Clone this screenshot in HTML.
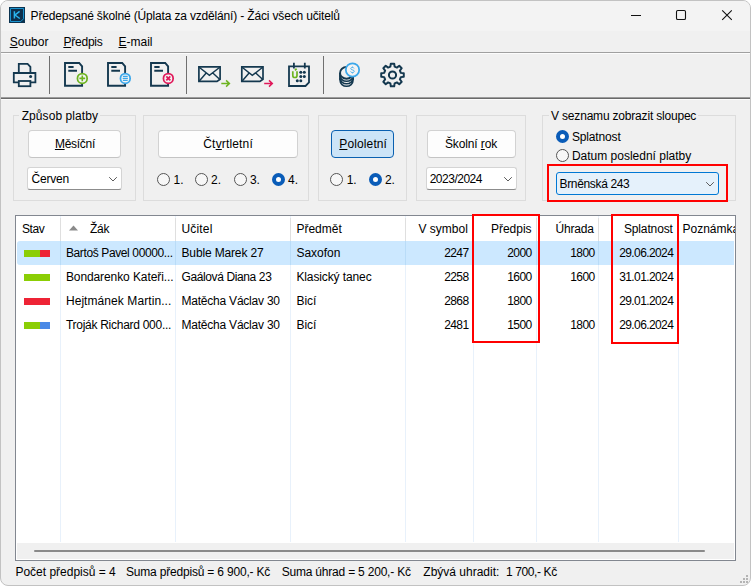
<!DOCTYPE html>
<html><head><meta charset="utf-8">
<style>
*{box-sizing:border-box;margin:0;padding:0}
html,body{width:751px;height:586px;overflow:hidden;background:#fff}
body{font-family:"Liberation Sans",sans-serif;font-size:12px;color:#000;position:relative}
.abs{position:absolute}
#win{position:absolute;left:0;top:0;width:751px;height:586px;background:#f0f0f0;border-radius:8px;overflow:hidden;border:1px solid #c2c2c2}
.t{position:absolute;white-space:nowrap;line-height:16px;height:16px}
.gb{position:absolute;border:1px solid #dcdcdc}
.btn{position:absolute;background:#fdfdfd;border:1px solid #d2d2d2;border-bottom-color:#c4c4c4;border-radius:4px;height:28px}
.cmb{position:absolute;background:#fff;border:1px solid #d4d4d4;border-bottom-color:#8c8c8c;border-radius:3px;height:23px}
.rad{position:absolute;width:13px;height:13px;border:1px solid #555;border-radius:50%;background:#f7f7f7}
.rad.on{border:4.4px solid #0a5cb8;background:#fff}
u{text-decoration:underline;text-underline-offset:1px}
.hl{position:absolute;height:1px}
.vl{position:absolute;width:1px}
.red{position:absolute;border:2px solid #ff0000}
</style></head><body>
<div id="win">
<div class="abs" style="left:-1px;top:-1px;width:751px;height:31px;background:#f3f3f3"></div>
<svg class="abs" style="left:8px;top:6px" width="16" height="16" viewBox="0 0 16 16"><rect x="0" y="0" width="16" height="16" fill="#0b3350"/><path d="M1.5 1.5h13v10.3l-2.7 2.7H1.5z" fill="#0d2f4b" stroke="#1a93cf" stroke-width="1"/><path d="M5.4 4.3v7.2M10.6 4.3l-4.6 3.7l4.8 3.5" fill="none" stroke="#2ab4ee" stroke-width="1.5"/></svg>
<div class="t" id="title" style="left:29.60px;top:7px;letter-spacing:-0.165px;">Předepsané školné (Úplata za vzdělání) - Žáci všech učitelů</div>
<svg class="abs" style="left:599px;top:-1px" width="150" height="30" viewBox="0 0 150 30"><path d="M31 15.5h10M122.2 10.3l9.6 9.6M131.8 10.3l-9.6 9.6" fill="none" stroke="#111" stroke-width="1.1"/><rect x="76.5" y="10.5" width="9" height="9" rx="1.3" fill="none" stroke="#111" stroke-width="1.1"/></svg>
<div class="t" id="m1" style="left:8.70px;top:33px;letter-spacing:0.000px;"><u>S</u>oubor</div><div class="t" id="m2" style="left:62.40px;top:33px;letter-spacing:-0.213px;"><u>P</u>ředpis</div><div class="t" id="m3" style="left:117.50px;top:33px;letter-spacing:0.000px;"><u>E</u>-mail</div>
<div class="hl" style="left:0;top:51px;width:751px;background:#a0a0a0"></div>
<div class="hl" style="left:0;top:52px;width:751px;background:#fcfcfc"></div>
<div class="hl" style="left:0;top:96px;width:751px;background:#9c9c9c"></div>
<div class="hl" style="left:0;top:97px;width:751px;background:#6a6a6a"></div>
<div class="hl" style="left:0;top:98px;width:751px;background:#fcfcfc"></div>
<div class="vl" style="left:48px;top:55px;height:38px;background:#707070"></div>
<div class="vl" style="left:185px;top:55px;height:38px;background:#707070"></div>
<div class="vl" style="left:322px;top:55px;height:38px;background:#707070"></div>
<svg class="abs" style="left:-1px;top:-1px" width="751" height="100" viewBox="0 0 751 100"><path d="M18.8 73V63.8H27.6L30.4 66.8V73" fill="none" stroke="#14384f" stroke-width="1.8"/><path d="M18.8 82.4H13.8V73H35.4V82.4H30.4" fill="none" stroke="#14384f" stroke-width="1.8"/><rect x="18.8" y="81" width="11.6" height="5.2" fill="none" stroke="#14384f" stroke-width="1.8"/><circle cx="30.6" cy="76.4" r="1.5" fill="#14384f"/><g transform="translate(64,0)"><path d="M1 63H15.2L18.1 66.4V85.8H1Z" fill="none" stroke="#14384f" stroke-width="1.9" stroke-linejoin="miter"/><path d="M4.3 67H9.6M4.3 70.7H13" stroke="#14384f" stroke-width="1.9" fill="none"/><circle cx="18.3" cy="78.4" r="4.85" fill="#f4f4f4" stroke="#6db31f" stroke-width="1.75"/><path d="M15.4 78.4H21.2M18.3 75.5V81.3" stroke="#6db31f" stroke-width="1.6" fill="none"/></g><g transform="translate(107,0)"><path d="M1 63H15.2L18.1 66.4V85.8H1Z" fill="none" stroke="#14384f" stroke-width="1.9" stroke-linejoin="miter"/><path d="M4.3 67H9.6M4.3 70.7H13" stroke="#14384f" stroke-width="1.9" fill="none"/><circle cx="18.3" cy="78.4" r="4.85" fill="#f4f4f4" stroke="#3ba7ea" stroke-width="1.75"/><path d="M15.9 76.4H20.7M15.7 78.4H20.9M15.9 80.4H20.7" stroke="#3ba7ea" stroke-width="1.15" fill="none"/></g><g transform="translate(150,0)"><path d="M1 63H15.2L18.1 66.4V85.8H1Z" fill="none" stroke="#14384f" stroke-width="1.9" stroke-linejoin="miter"/><path d="M4.3 67H9.6M4.3 70.7H13" stroke="#14384f" stroke-width="1.9" fill="none"/><circle cx="18.3" cy="78.4" r="4.85" fill="#f4f4f4" stroke="#e0195a" stroke-width="1.75"/><path d="M16.3 76.4L20.3 80.4M20.3 76.4L16.3 80.4" stroke="#e0195a" stroke-width="1.8" fill="none"/></g><g transform="translate(0,0)"><path d="M198.9 66.8H220.1V79.3L217 81.4H198.9Z" fill="none" stroke="#14384f" stroke-width="1.7" stroke-linejoin="miter"/><path d="M199.2 67.2L209.4 75.4L219.8 67.2M199.3 81L206.2 73M219.6 79.2L212.8 73" fill="none" stroke="#14384f" stroke-width="1.45"/><path d="M221.3 83.5H229.2M226.1 80.4L229.4 83.5L226.1 86.6" fill="none" stroke="#6db31f" stroke-width="1.5"/></g><g transform="translate(42.900000000000006,0)"><path d="M198.9 66.8H220.1V79.3L217 81.4H198.9Z" fill="none" stroke="#14384f" stroke-width="1.7" stroke-linejoin="miter"/><path d="M199.2 67.2L209.4 75.4L219.8 67.2M199.3 81L206.2 73M219.6 79.2L212.8 73" fill="none" stroke="#14384f" stroke-width="1.45"/><path d="M221.3 83.5H229.2M226.1 80.4L229.4 83.5L226.1 86.6" fill="none" stroke="#e0195a" stroke-width="1.5"/></g><path d="M289 66.3H309V82.5L305.5 86H289Z" fill="none" stroke="#14384f" stroke-width="1.8"/><path d="M293.9 62.8V68.6M304.8 62.8V68.6" stroke="#14384f" stroke-width="1.8"/><path d="M292.8 71.3V75.4a2.1 2.1 0 0 0 4.2 0V71.3M295 70.3L296.6 68.6" fill="none" stroke="#6db31f" stroke-width="1.7"/><circle cx="300.8" cy="72.3" r="1.5" fill="#14384f"/><circle cx="304.3" cy="72.3" r="1.5" fill="#14384f"/><circle cx="300.8" cy="76.6" r="1.5" fill="#14384f"/><circle cx="304.3" cy="76.6" r="1.5" fill="#14384f"/><circle cx="297.3" cy="80.8" r="1.5" fill="#14384f"/><circle cx="300.8" cy="80.8" r="1.5" fill="#14384f"/><ellipse cx="346.55" cy="72.9" rx="6.5" ry="5.9" fill="none" stroke="#14384f" stroke-width="1.9"/><path d="M340.05 72.9V80.4M353.05 72.9V80.4" fill="none" stroke="#14384f" stroke-width="1.9"/><path d="M340.05 75.4a6.5 5.9 0 0 0 13 0M340.05 77.9a6.5 5.9 0 0 0 13 0M340.05 80.4a6.5 5.9 0 0 0 13 0" fill="none" stroke="#14384f" stroke-width="1.5"/><circle cx="352.5" cy="69.9" r="6.65" fill="#f3f3f3" stroke="#3ba7ea" stroke-width="1.75"/><path d="M354 68.4c-0.3-0.7-0.9-1-1.6-1c-1 0-1.6 0.5-1.6 1.2c0 1.7 3.4 0.8 3.4 2.7c0 0.8-0.7 1.3-1.8 1.3c-0.9 0-1.5-0.4-1.8-1.1M352.5 66.6V67.4M352.5 72.6V73.4" fill="none" stroke="#3fabec" stroke-width="0.95"/><path d="M390.37 66.67L390.80 63.73L394.20 63.73L394.63 66.67L396.89 67.60L399.27 65.82L401.68 68.23L399.90 70.61L400.83 72.87L403.77 73.30L403.77 76.70L400.83 77.13L399.90 79.39L401.68 81.77L399.27 84.18L396.89 82.40L394.63 83.33L394.20 86.27L390.80 86.27L390.37 83.33L388.11 82.40L385.73 84.18L383.32 81.77L385.10 79.39L384.17 77.13L381.23 76.70L381.23 73.30L384.17 72.87L385.10 70.61L383.32 68.23L385.73 65.82L388.11 67.60Z" fill="none" stroke="#14384f" stroke-width="2" stroke-linejoin="round"/><circle cx="392.5" cy="75" r="3.6" fill="none" stroke="#14384f" stroke-width="2"/></svg>
<div class="gb" style="left:12px;top:114px;width:123px;height:86px"></div>
<div class="abs" style="left:18px;top:112px;width:81px;height:5px;background:#f0f0f0"></div>
<div class="t" id="gl1" style="left:20.70px;top:107px;letter-spacing:0.080px;background:#f0f0f0;">Způsob platby</div>
<div class="btn" style="left:27px;top:129px;width:93px"></div><div class="t" id="b1" style="left:53.90px;top:135px;letter-spacing:-0.266px;"><u>M</u>ěsíční</div>
<div class="cmb" style="left:26px;top:166px;width:95px"><svg class="abs" style="right:3px;top:8px" width="10" height="7" viewBox="0 0 10 7"><path d="M1.2 1.2L5 5L8.8 1.2" fill="none" stroke="#5c5c5c" stroke-width="1"/></svg></div><div class="t" id="c1" style="left:30.60px;top:170px;letter-spacing:-0.208px;">Červen</div>
<div class="gb" style="left:142px;top:114px;width:166px;height:86px"></div>
<div class="btn" style="left:157px;top:129px;width:140px"></div><div class="t" id="b2" style="left:202.30px;top:135px;letter-spacing:0.160px;">Čt<u>v</u>rtletní</div>
<div class="gb" style="left:317px;top:114px;width:89px;height:86px"></div>
<div class="btn" style="left:330px;top:129px;width:63px;background:#cce4f7;border-color:#0a60b0"></div><div class="t" id="b3" style="left:338.30px;top:135px;letter-spacing:0.120px;"><u>P</u>ololetní</div>
<div class="gb" style="left:415px;top:114px;width:110px;height:86px"></div>
<div class="btn" style="left:426px;top:129px;width:89px"></div><div class="t" id="b4" style="left:443.90px;top:135px;letter-spacing:-0.107px;">Školní <u>r</u>ok</div>
<div class="cmb" style="left:425px;top:166px;width:91px"><svg class="abs" style="right:3px;top:8px" width="10" height="7" viewBox="0 0 10 7"><path d="M1.2 1.2L5 5L8.8 1.2" fill="none" stroke="#5c5c5c" stroke-width="1"/></svg></div><div class="t" id="c2" style="left:428.70px;top:170px;letter-spacing:-0.500px;">2023/2024</div>
<div class="gb" style="left:541px;top:114px;width:194px;height:86px"></div>
<div class="abs" style="left:548px;top:112px;width:149px;height:5px;background:#f0f0f0"></div>
<div class="t" id="gl5" style="left:550.10px;top:107px;letter-spacing:-0.192px;background:#f0f0f0;">V seznamu zobrazit sloupec</div>
<div class="cmb" style="left:555px;top:171px;width:163px;background:#e5f1fb;border-color:#0078d4"><svg class="abs" style="right:3px;top:8px" width="10" height="7" viewBox="0 0 10 7"><path d="M1.2 1.2L5 5L8.8 1.2" fill="none" stroke="#5c5c5c" stroke-width="1"/></svg></div><div class="t" id="c3" style="left:558.50px;top:175px;letter-spacing:-0.342px;">Brněnská 243</div>
<div class="red" style="left:546px;top:163px;width:181px;height:38px"></div>
<div class="rad" style="left:156.0px;top:172.0px"></div><div class="t" id="rad0" style="left:172.50px;top:171px;letter-spacing:0.000px;">1.</div><div class="rad" style="left:193.5px;top:172.0px"></div><div class="t" id="rad1" style="left:210.10px;top:171px;letter-spacing:0.000px;">2.</div><div class="rad" style="left:232.8px;top:172.0px"></div><div class="t" id="rad2" style="left:248.90px;top:171px;letter-spacing:0.000px;">3.</div><div class="rad on" style="left:270.8px;top:172.0px"></div><div class="t" id="rad3" style="left:287.00px;top:171px;letter-spacing:0.000px;">4.</div><div class="rad" style="left:329.0px;top:172.0px"></div><div class="t" id="rad4" style="left:345.70px;top:171px;letter-spacing:0.000px;">1.</div><div class="rad on" style="left:367.9px;top:172.0px"></div><div class="t" id="rad5" style="left:383.90px;top:171px;letter-spacing:0.000px;">2.</div><div class="rad on" style="left:555.0px;top:129.0px"></div><div class="t" id="l_splat" style="left:570.90px;top:128px;letter-spacing:-0.140px;">Splatnost</div><div class="rad" style="left:555.0px;top:148.3px"></div><div class="t" id="l_datum" style="left:570.90px;top:147px;letter-spacing:0.000px;">Datum poslední platby</div>
<div class="abs" id="list" style="left:14px;top:214px;width:721px;height:346px;background:#fff;border:1px solid #828790;overflow:hidden"><div class="abs" style="left:1px;top:25px;width:717px;height:24px;background:#cce8ff;border-radius:3px 0 0 3px"></div><div class="vl" style="left:44px;top:0;height:326px;background:#e8f1fb"></div><div class="vl" style="left:44px;top:2px;height:23px;background:#dfdfdf"></div><div class="vl" style="left:44px;top:25px;height:24px;background:#b9dcf8"></div><div class="vl" style="left:159px;top:0;height:326px;background:#e8f1fb"></div><div class="vl" style="left:159px;top:2px;height:23px;background:#dfdfdf"></div><div class="vl" style="left:159px;top:25px;height:24px;background:#b9dcf8"></div><div class="vl" style="left:274px;top:0;height:326px;background:#e8f1fb"></div><div class="vl" style="left:274px;top:2px;height:23px;background:#dfdfdf"></div><div class="vl" style="left:274px;top:25px;height:24px;background:#b9dcf8"></div><div class="vl" style="left:389px;top:0;height:326px;background:#e8f1fb"></div><div class="vl" style="left:389px;top:2px;height:23px;background:#dfdfdf"></div><div class="vl" style="left:389px;top:25px;height:24px;background:#b9dcf8"></div><div class="vl" style="left:457px;top:0;height:326px;background:#e8f1fb"></div><div class="vl" style="left:457px;top:2px;height:23px;background:#dfdfdf"></div><div class="vl" style="left:457px;top:25px;height:24px;background:#b9dcf8"></div><div class="vl" style="left:520px;top:0;height:326px;background:#e8f1fb"></div><div class="vl" style="left:520px;top:2px;height:23px;background:#dfdfdf"></div><div class="vl" style="left:520px;top:25px;height:24px;background:#b9dcf8"></div><div class="vl" style="left:582px;top:0;height:326px;background:#e8f1fb"></div><div class="vl" style="left:582px;top:2px;height:23px;background:#dfdfdf"></div><div class="vl" style="left:582px;top:25px;height:24px;background:#b9dcf8"></div><div class="vl" style="left:662px;top:0;height:326px;background:#e8f1fb"></div><div class="vl" style="left:662px;top:2px;height:23px;background:#dfdfdf"></div><div class="vl" style="left:662px;top:25px;height:24px;background:#b9dcf8"></div><div class="t" id="h_stav" style="left:5.90px;top:5px;letter-spacing:-0.347px;">Stav</div><div class="t" id="h_zak" style="left:73.90px;top:5px;letter-spacing:-0.200px;">Žák</div><div class="t" id="h_ucitel" style="left:165.50px;top:5px;letter-spacing:0.160px;">Učitel</div><div class="t" id="h_predmet" style="left:280.40px;top:5px;letter-spacing:0.000px;">Předmět</div><div class="t" id="h_vsym" style="left:402.50px;top:5px;letter-spacing:0.000px;">V symbol</div><div class="t" id="h_predpis" style="left:474.90px;top:5px;letter-spacing:0.000px;">Předpis</div><div class="t" id="h_uhrada" style="left:539.50px;top:5px;letter-spacing:-0.192px;">Úhrada</div><div class="t" id="h_splat" style="left:607.90px;top:5px;letter-spacing:-0.130px;">Splatnost</div><div class="t" id="h_pozn" style="left:666.50px;top:5px;letter-spacing:0.000px;">Poznámka</div><svg class="abs" style="left:53px;top:9px" width="10" height="6"><path d="M0 5.5L4.5 0.5L9 5.5Z" fill="#8a8a8a"/></svg><div class="abs" style="left:8px;top:34px;width:16px;height:7px;background:#8bce05"></div><div class="abs" style="left:24px;top:34px;width:10px;height:7px;background:#ee2335"></div><div class="t" id="r0c2" style="left:49.90px;top:29px;letter-spacing:-0.376px;">Bartoš Pavel 00000...</div><div class="t" id="r0c3" style="left:165.50px;top:29px;letter-spacing:-0.148px;">Buble Marek 27</div><div class="t" id="r0c4" style="left:280.40px;top:29px;letter-spacing:0.000px;">Saxofon</div><div class="t" id="r0c5" style="left:428.20px;top:29px;letter-spacing:-0.600px;">2247</div><div class="t" id="r0c6" style="left:491.30px;top:29px;letter-spacing:-0.600px;">2000</div><div class="t" id="r0c7" style="left:554.30px;top:29px;letter-spacing:-0.600px;">1800</div><div class="t" id="r0c8" style="left:603.20px;top:29px;letter-spacing:-0.600px;">29.06.2024</div><div class="abs" style="left:8px;top:58px;width:26px;height:7px;background:#8bce05"></div><div class="t" id="r1c2" style="left:49.90px;top:53px;letter-spacing:-0.093px;">Bondarenko Kateři...</div><div class="t" id="r1c3" style="left:165.50px;top:53px;letter-spacing:-0.384px;">Gaálová Diana 23</div><div class="t" id="r1c4" style="left:280.40px;top:53px;letter-spacing:-0.111px;">Klasický tanec</div><div class="t" id="r1c5" style="left:428.20px;top:53px;letter-spacing:-0.600px;">2258</div><div class="t" id="r1c6" style="left:491.30px;top:53px;letter-spacing:-0.600px;">1600</div><div class="t" id="r1c7" style="left:554.30px;top:53px;letter-spacing:-0.600px;">1600</div><div class="t" id="r1c8" style="left:603.20px;top:53px;letter-spacing:-0.600px;">31.01.2024</div><div class="abs" style="left:8px;top:82px;width:26px;height:7px;background:#ee2335"></div><div class="t" id="r2c2" style="left:49.90px;top:77px;letter-spacing:0.076px;">Hejtmánek Martin...</div><div class="t" id="r2c3" style="left:165.50px;top:77px;letter-spacing:-0.220px;">Matěcha Václav 30</div><div class="t" id="r2c4" style="left:280.40px;top:77px;letter-spacing:0.000px;">Bicí</div><div class="t" id="r2c5" style="left:428.20px;top:77px;letter-spacing:-0.600px;">2868</div><div class="t" id="r2c6" style="left:491.30px;top:77px;letter-spacing:-0.600px;">1800</div><div class="t" id="r2c8" style="left:603.20px;top:77px;letter-spacing:-0.600px;">29.01.2024</div><div class="abs" style="left:8px;top:106px;width:16px;height:7px;background:#8bce05"></div><div class="abs" style="left:24px;top:106px;width:10px;height:7px;background:#4a89e6"></div><div class="t" id="r3c2" style="left:49.90px;top:101px;letter-spacing:-0.272px;">Troják Richard 000...</div><div class="t" id="r3c3" style="left:165.50px;top:101px;letter-spacing:-0.220px;">Matěcha Václav 30</div><div class="t" id="r3c4" style="left:280.40px;top:101px;letter-spacing:0.000px;">Bicí</div><div class="t" id="r3c5" style="left:428.20px;top:101px;letter-spacing:-0.600px;">2481</div><div class="t" id="r3c6" style="left:491.30px;top:101px;letter-spacing:-0.600px;">1500</div><div class="t" id="r3c7" style="left:554.30px;top:101px;letter-spacing:-0.600px;">1800</div><div class="t" id="r3c8" style="left:603.20px;top:101px;letter-spacing:-0.600px;">29.06.2024</div><div class="abs" style="left:1px;top:327px;width:717px;height:16px;background:#f0f0f0"></div><div class="abs" style="left:18px;top:334px;width:671px;height:2px;background:#8a8a8a;border-radius:1px"></div></div><div class="red" style="left:471px;top:213px;width:68px;height:129px"></div><div class="red" style="left:610px;top:213px;width:68px;height:130px"></div>
<div class="t" id="s1" style="left:14.40px;top:563px;letter-spacing:0.000px;">Počet předpisů = 4</div><div class="t" id="s2" style="left:125.00px;top:563px;letter-spacing:-0.192px;">Suma předpisů = 6 900,- Kč</div><div class="t" id="s3" style="left:280.70px;top:563px;letter-spacing:-0.203px;">Suma úhrad = 5 200,- Kč</div><div class="t" id="s4" style="left:422.30px;top:563px;letter-spacing:0.000px;">Zbývá uhradit:</div><div class="t" id="s5" style="left:504.90px;top:563px;letter-spacing:-0.373px;">1 700,- Kč</div>
<div class="abs" style="left:745px;top:574px;width:2px;height:2px;background:#b4b4b4"></div><div class="abs" style="left:742px;top:577px;width:2px;height:2px;background:#b4b4b4"></div><div class="abs" style="left:745px;top:577px;width:2px;height:2px;background:#b4b4b4"></div><div class="abs" style="left:739px;top:580px;width:2px;height:2px;background:#b4b4b4"></div><div class="abs" style="left:742px;top:580px;width:2px;height:2px;background:#b4b4b4"></div><div class="abs" style="left:745px;top:580px;width:2px;height:2px;background:#b4b4b4"></div>
</div>
</body></html>
